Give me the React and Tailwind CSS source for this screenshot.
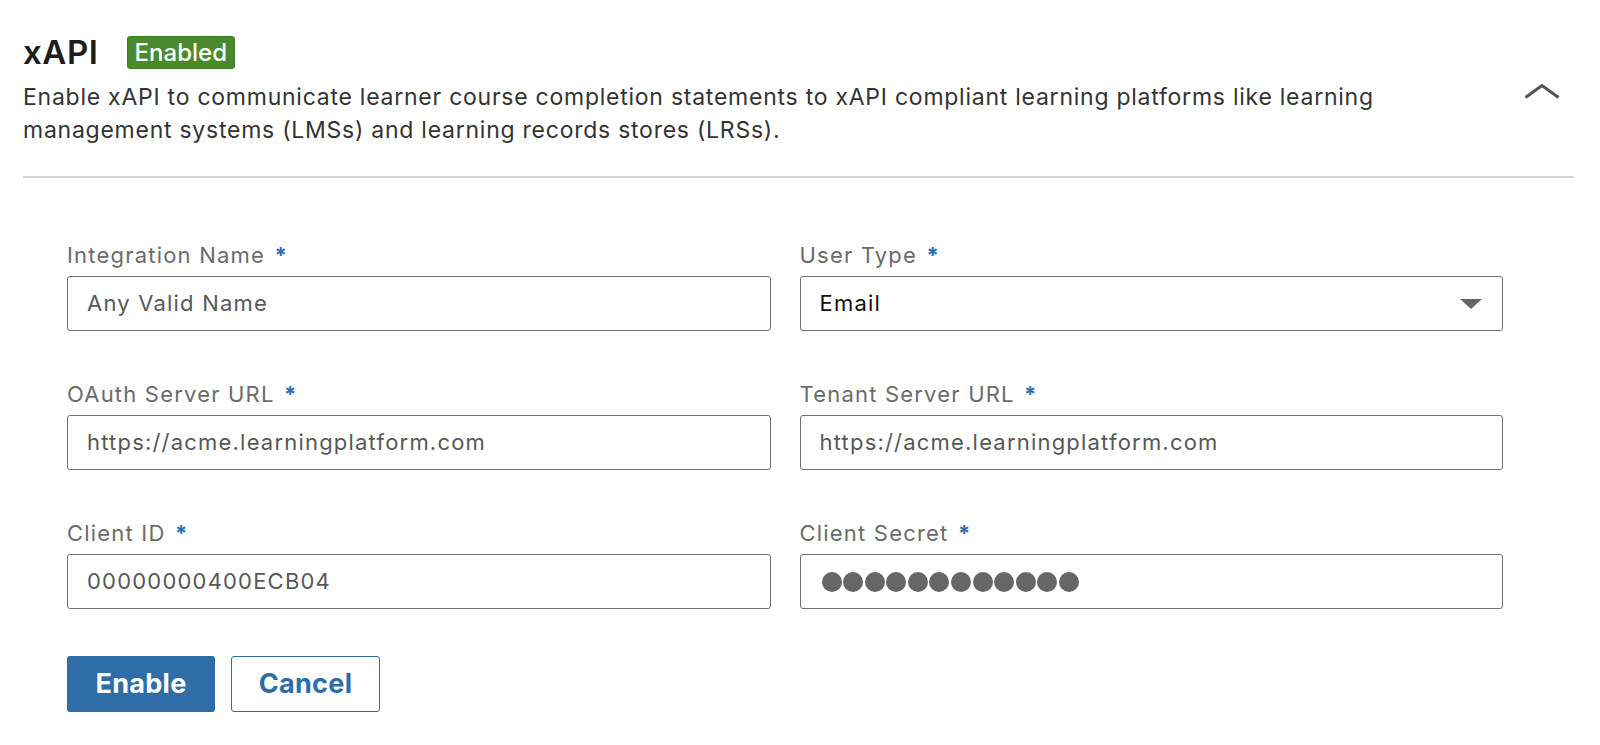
import React from "react";

const fields = [
  { label: "Integration Name", value: "Any Valid Name" },
  { label: "User Type", value: "Email", select: true },
  { label: "OAuth Server URL", value: "https://acme.learningplatform.com" },
  { label: "Tenant Server URL", value: "https://acme.learningplatform.com" },
  { label: "Client ID", value: "00000000400ECB04" },
  { label: "Client Secret", secret: 12 },
];

function Field({ label, value, select, secret }) {
  return (
    <div>
      <label className="block text-[22px] leading-[28px] tracking-[1.2px] text-[#6b6b6b]">
        {label} <span className="ml-[2px] font-bold text-[#2d6db3]">*</span>
      </label>
      <div className="mt-[7px] flex h-[55px] items-center justify-between rounded-[3px] border border-[#707070] bg-white pl-[19px] pr-[20px]">
        {secret ? (
          <div className="flex gap-[1.6px] pl-[2px]">
            {Array.from({ length: secret }).map((_, i) => (
              <span key={i} className="h-[20px] w-[20px] rounded-full bg-[#666]" />
            ))}
          </div>
        ) : (
          <span className={`text-[22px] tracking-[1.2px] ${select ? "text-[#111]" : "text-[#585858]"}`}>{value}</span>
        )}
        {select && (
          <svg width="22" height="10" viewBox="0 0 22 10">
            <polygon points="0,0 22,0 11,10" fill="#666" />
          </svg>
        )}
      </div>
    </div>
  );
}

export default function App() {
  return (
    <div className="min-h-screen bg-white" style={{ fontFamily: "Inter, 'Liberation Sans', sans-serif" }}>
      <div className="pl-[23px] pr-[26px] pt-[36px]">
        <div className="flex items-center justify-between">
          <div>
            <div className="flex h-[33px] items-center gap-[28px]">
              <h2 className="text-[33px] font-semibold leading-none tracking-[0.6px] text-[#1d1d1d]">xAPI</h2>
              <span className="h-[33px] rounded-[3px] border border-[#3e7b23] bg-[#4a8a2c] px-[7px] text-[24px] font-medium leading-[31px] text-white">
                Enabled
              </span>
            </div>
            <p className="mt-[12px] max-w-[1420px] text-[23px] leading-[33px] tracking-[0.75px] text-[#333]">
              Enable xAPI to communicate learner course completion statements to xAPI compliant learning platforms like learning
              management systems (LMSs) and learning records stores (LRSs).
            </p>
          </div>
          <button className="mr-[14px]" aria-label="Collapse">
            <svg width="36" height="15" viewBox="0 0 36 15">
              <polyline points="1.5,13.5 18,1.5 34.5,13.5" fill="none" stroke="#555" strokeWidth="3" />
            </svg>
          </button>
        </div>
        <div className="mt-[29px] h-[2px] bg-[#d4d4d4]" />
        <form className="pl-[44px] pt-[63px]">
          <div className="grid w-[1436px] grid-cols-2 gap-x-[29px] gap-y-[49px]">
            {fields.map((f) => (
              <Field key={f.label} {...f} />
            ))}
          </div>
          <div className="mt-[47px] flex gap-[16px]">
            <button type="button" className="h-[56px] w-[148px] rounded-[3px] bg-[#2e6da8] text-[27px] font-bold tracking-[0.3px] text-white">
              Enable
            </button>
            <button type="button" className="h-[56px] w-[149px] rounded-[3px] border-[1.5px] border-[#2e6da8] bg-white text-[27px] font-bold tracking-[0.3px] text-[#2e6da8]">
              Cancel
            </button>
          </div>
        </form>
      </div>
    </div>
  );
}
